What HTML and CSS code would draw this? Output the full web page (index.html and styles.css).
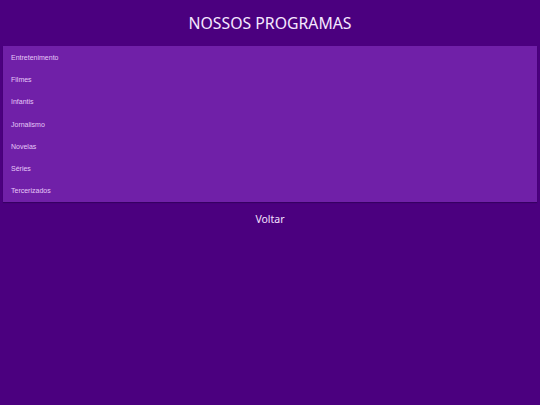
FILE: index.html
```html
<!DOCTYPE html>
<html lang="pt">
<head>
<meta charset="utf-8">
<link rel="stylesheet" href="styles.css">
</head>
<body>
<header class="top"><h1 class="title">NOSSOS PROGRAMAS</h1></header>
<ul class="list">
<li class="item">Entretenimento</li>
<li class="item">Filmes</li>
<li class="item">Infantis</li>
<li class="item">Jornalismo</li>
<li class="item">Novelas</li>
<li class="item">Séries</li>
<li class="item">Tercerizados</li>
</ul>
<div class="back"><a class="back-link">Voltar</a></div>
</body>
</html>
```
FILE: styles.css
```css
html, body { margin: 0; padding: 0; }
body {
  background: #4b007f;
  width: 540px;
  height: 405px;
  font-family: "Liberation Sans", Arial, sans-serif;
  overflow: hidden;
}
.top { height: 46px; display: flex; align-items: center; justify-content: center; }
.title {
  margin: 0;
  font-family: "Noto Sans", "Open Sans", sans-serif;
  font-weight: 400;
  font-size: 15.8px;
  color: #f6e8ff;
}
.list {
  list-style: none;
  margin: 0 3px;
  padding: 0;
  background: #7020a8;
  box-shadow: 0 1px 1px rgba(40,0,80,0.6);
}
.item {
  height: 22.3px;
  display: flex;
  align-items: center;
  padding-left: 8px;
  font-size: 7px;
  color: #e6c8f8;
}
.back { display: flex; justify-content: center; padding-top: 10px; }
.back-link {
  font-family: "Noto Sans", "Open Sans", sans-serif;
  font-size: 10.5px;
  color: #f4e2ff;
}
```
